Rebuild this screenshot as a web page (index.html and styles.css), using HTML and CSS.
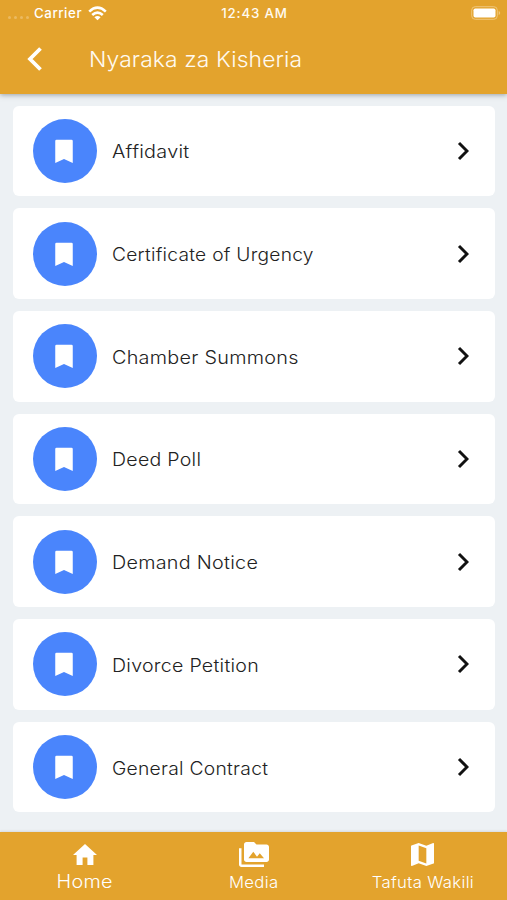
FILE: index.html
```
<!DOCTYPE html>
<html lang="sw">
<head>
<meta charset="utf-8">
<meta name="viewport" content="width=device-width, initial-scale=1">
<title>Nyaraka za Kisheria</title>
<link rel="stylesheet" href="styles.css">
</head>
<body>
<svg class="defs" width="0" height="0" aria-hidden="true">
<symbol id="bookmark" viewBox="0 0 24 24"><path d="M18 3H6q-1 0-1 1v17.500l7-3.200 7 3.200V4q0-1-1-1z"/></symbol>
<symbol id="chevron" viewBox="0 0 12 20"><path d="M2 2l8 8-8 8" fill="none" stroke="currentColor" stroke-width="3"/></symbol>
</svg>
<div class="app">
<header class="header">
<div class="status">
<div class="carrier"><span class="signal"><i></i><i></i><i></i><i></i></span><span class="carrier-name">Carrier</span>
<svg class="wifi" viewBox="0 0 19 15"><g fill="none" stroke="currentColor" stroke-width="2.600"><path d="M1.200 5.600Q9.500-2.200 17.800 5.600M4.200 9Q9.500 4.200 14.800 9"/></g><path d="M6.400 11.200Q9.500 8.600 12.600 11.200L9.500 14.300Z" fill="currentColor"/></svg></div>
<span class="time">12:43 AM</span>
<svg class="battery" viewBox="0 0 30 14"><rect x=".7" y=".7" width="25.600" height="12.600" rx="3.500" fill="none" stroke="#efc67a" stroke-width="1"/><rect x="2.500" y="2.500" width="22" height="9" rx="1.800" fill="#fff"/><path d="M27.700 5v4q1.500-.6 1.500-2t-1.500-2z" fill="#efc67a"/></svg>
</div>
<div class="titlebar">
<svg class="back" viewBox="0 0 16 26"><path d="M13.500 2.500L3 13l10.500 10.500" fill="none" stroke="#fff" stroke-width="3.800"/></svg>
<h1>Nyaraka za Kisheria</h1>
</div>
</header>
<main class="list">
<a class="card"><span class="disc"><svg><use href="#bookmark"/></svg></span><span class="label affidavit">Affidavit</span><svg class="chev"><use href="#chevron"/></svg></a>
<a class="card"><span class="disc"><svg><use href="#bookmark"/></svg></span><span class="label urgency">Certificate of Urgency</span><svg class="chev"><use href="#chevron"/></svg></a>
<a class="card"><span class="disc"><svg><use href="#bookmark"/></svg></span><span class="label summons">Chamber Summons</span><svg class="chev"><use href="#chevron"/></svg></a>
<a class="card"><span class="disc"><svg><use href="#bookmark"/></svg></span><span class="label deed">Deed Poll</span><svg class="chev"><use href="#chevron"/></svg></a>
<a class="card"><span class="disc"><svg><use href="#bookmark"/></svg></span><span class="label demand">Demand Notice</span><svg class="chev"><use href="#chevron"/></svg></a>
<a class="card"><span class="disc"><svg><use href="#bookmark"/></svg></span><span class="label divorce">Divorce Petition</span><svg class="chev"><use href="#chevron"/></svg></a>
<a class="card"><span class="disc"><svg><use href="#bookmark"/></svg></span><span class="label contract">General Contract</span><svg class="chev"><use href="#chevron"/></svg></a>
</main>
<nav class="tabs">
<a class="tab active"><svg class="home" viewBox="2 3 20 17" preserveAspectRatio="none"><path d="M10 20v-6h4v6h5v-8h3L12 3 2 12h3v8z"/></svg><span>Home</span></a>
<a class="tab"><svg class="media" viewBox="0 1 24 20"><path d="M2 6H0v13c0 1.100.9 2 2 2h18v-2H2V6zM22 3h-8l-2-2H6c-1.100 0-2 .9-2 2v12c0 1.100.9 2 2 2h16c1.100 0 2-.9 2-2V5c0-1.100-.9-2-2-2zM7.500 14l3.900-5.200 3 3.900 2.200-2.700L20 14z"/></svg><span>Media</span></a>
<a class="tab"><svg class="map" viewBox="3 3 18 18"><path d="M20.500 3l-.16.03L15 5.100 9 3 3.360 4.900c-.21.07-.36.25-.36.480V20.500c0 .28.220.5.500.5l.16-.03L9 18.900l6 2.100 5.640-1.900c.21-.07.36-.25.36-.48V3.500c0-.28-.22-.5-.5-.5zM15 19l-6-2.110V5l6 2.110V19z"/></svg><span>Tafuta Wakili</span></a>
</nav>
</div>
</body>
</html>
```
FILE: styles.css
```
* { box-sizing: border-box; }
body { margin: 0; font-family: Inter, "Liberation Sans", sans-serif; background: #edf1f4; }
.defs { position: absolute; }
svg { display: block; flex: none; fill: currentColor; }
.app { width: 507px; height: 900px; display: flex; flex-direction: column; overflow: hidden; }
.header { flex: none; height: 94px; background: #e3a32d; color: #fffaf0; box-shadow: 0 1px 5px rgba(70, 80, 90, .5); }
.status { height: 26px; display: grid; grid-template-columns: 1fr auto 1fr; align-items: center; padding: 0 6px 0 8px; font-size: 13.3px; font-weight: 500; }
.carrier { display: flex; align-items: center; color: #fff; }
.signal { display: flex; gap: 3px; width: 26px; padding-top: 8px; }
.signal i { width: 3px; height: 3px; border-radius: 50%; background: #ebba61; }
.carrier-name { width: 48px; letter-spacing: .55px; }
.wifi { width: 19px; height: 15px; margin-left: 6px; }
.time { letter-spacing: .85px; }
.battery { width: 30px; height: 14px; justify-self: end; }
.titlebar { height: 66px; display: flex; align-items: center; padding-left: 27px; }
.back { width: 16px; height: 26px; }
h1 { margin: 0 0 0 46px; font-size: 22px; line-height: 30px; font-weight: 300; letter-spacing: .1px; white-space: nowrap; transform: scaleX(1.04); transform-origin: left; }
.list { flex: 1; min-height: 0; padding: 11.5px 12px 0 13px; display: flex; flex-direction: column; gap: 11.9px; }
.card { flex: none; height: 90.8px; border-radius: 6px; background: #fff; display: flex; align-items: center; padding: 0 26px 0 19.5px; color: #111; }
.disc { flex: none; width: 64px; height: 64px; border-radius: 50%; background: #4a85fc; color: #fff; display: flex; align-items: center; justify-content: center; }
.disc svg { width: 30px; height: 30px; margin-right: 1px; }
.label { flex: 1; margin: 3px 0 0 15.500px; font-size: 18px; line-height: 26px; font-weight: 300; color: #222; white-space: nowrap; letter-spacing: .25px; transform-origin: left; }
.affidavit { transform: scaleX(1.1); }
.urgency { transform: scaleX(1.064); }
.summons { transform: scaleX(1.1); }
.deed { transform: scaleX(1.085); }
.demand { transform: scaleX(1.098); }
.divorce { transform: scaleX(1.087); }
.contract { transform: scaleX(1.07); }
.chev { width: 12px; height: 20px; }
.tabs { flex: none; height: 68.500px; background: #e3a32d; color: #fff; display: grid; grid-template-columns: repeat(3, 1fr); box-shadow: 0 -1px 2px rgba(90, 90, 90, .15); }
.tab { display: grid; grid-template-rows: 38px 24px; justify-items: center; align-items: center; font-size: 16px; font-weight: 300; letter-spacing: .3px; white-space: nowrap; }
.tab span { transform: scaleX(1.045); }
.tab svg { margin-top: 7px; }
.tab.active { font-size: 18px; }
.tab.active span { transform: scaleX(1.1); }
.home { width: 24px; height: 21px; }
.media { width: 30px; height: 25px; }
.map { width: 23px; height: 23px; }
```
